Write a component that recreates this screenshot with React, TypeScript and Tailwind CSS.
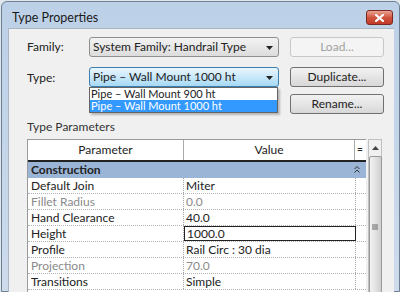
import React from 'react';

const font = { fontFamily: 'Lato, Roboto, sans-serif' };

const rows: { name: string; value: string; dim?: boolean; edit?: boolean }[] = [
  { name: 'Default Join', value: 'Miter' },
  { name: 'Fillet Radius', value: '0.0', dim: true },
  { name: 'Hand Clearance', value: '40.0' },
  { name: 'Height', value: '1000.0', edit: true },
  { name: 'Profile', value: 'Rail Circ : 30 dia' },
  { name: 'Projection', value: '70.0', dim: true },
  { name: 'Transitions', value: 'Simple' },
];

const Arrow = () => (
  <svg width="7" height="4" viewBox="0 0 7 4" className="absolute right-[5px] top-[8px]">
    <path d="M0 0h7L3.5 4z" fill="#222" />
  </svg>
);

const Button = ({ label, disabled }: { label: string; disabled?: boolean }) => (
  <div
    className={`h-[20px] w-[94px] rounded-[3px] border flex items-center justify-center text-[12px] ${
      disabled
        ? 'border-[#c8c8c8] bg-[#f4f4f4] text-[#a0a0a0]'
        : 'border-[#707070] bg-gradient-to-b from-[#f2f2f2] to-[#d8d8d8] text-[#222]'
    }`}
  >
    {label}
  </div>
);

export default function App() {
  return (
    <div className="w-[400px] h-[292px] bg-[#dfe6ee] overflow-hidden" style={font}>
      <div className="ml-[1px] mt-[1px] w-[399px] h-[291px] rounded-t-[6px] border border-[#6d7f93] bg-gradient-to-b from-[#bcd0e7] to-[#cddbeb] flex flex-col">
        <div className="h-[27px] flex items-start justify-between pl-[10px] pr-[6px]">
          <span className="text-[12.5px] text-[#1a1a1a] mt-[7px]">Type Properties</span>
          <div className="mt-[8px] w-[27px] h-[15px] rounded-[3px] border border-[#7a2a22] bg-gradient-to-b from-[#e8a393] via-[#d0543f] to-[#c13a26] flex items-center justify-center">
            <svg width="9" height="8" viewBox="0 0 9 8">
              <path d="M1 1l7 6M8 1L1 7" stroke="#fff" strokeWidth="2.2" strokeLinecap="square" />
            </svg>
          </div>
        </div>
        <div className="ml-[6px] w-[386px] flex-1 bg-[#f0f0f0] border-l border-t border-[#a9b6c4] flex flex-col pl-[18px] text-[12px] text-[#222]">
          <div className="flex items-center mt-[8px] h-[20px]">
            <span className="w-[62px]">Family:</span>
            <div className="relative w-[190px] h-[20px] rounded-[3px] border border-[#8e8f8f] bg-gradient-to-b from-[#f3f3f3] to-[#dcdcdc] pl-[3px] leading-[18px]">
              System Family: Handrail Type
              <Arrow />
            </div>
            <div className="ml-[11px]">
              <Button label="Load..." disabled />
            </div>
          </div>
          <div className="flex items-start mt-[10px]">
            <span className="w-[62px] mt-[2px]">Type:</span>
            <div className="flex flex-col">
              <div className="relative w-[190px] h-[20px] rounded-[3px] border border-[#3c7fb1] bg-gradient-to-b from-[#eaf6fd] to-[#a7d9f5] pl-[3px] leading-[18px]">
                Pipe – Wall Mount 1000 ht
                <Arrow />
              </div>
              <div className="relative z-10 w-[189px] border border-[#646464] bg-white shadow-[2px_2px_2px_rgba(0,0,0,0.25)] text-[11px] leading-[12px]">
                <div className="pl-[1px] h-[12px]">Pipe – Wall Mount 900 ht</div>
                <div className="pl-[1px] h-[12px] bg-[#3399ff] text-white">Pipe – Wall Mount 1000 ht</div>
              </div>
            </div>
            <div className="ml-[11px] flex flex-col gap-[7px]">
              <Button label="Duplicate..." />
              <Button label="Rename..." />
            </div>
          </div>
          <div className="mt-[4px] text-[#333]">Type Parameters</div>
          <div className="mt-[3px] flex">
            <div className="w-[339px] border-l border-t border-[#9a9a9a] bg-white">
              <div className="flex h-[22px] border-b-2 border-[#222] bg-white">
                <div className="w-[156px] border-r border-[#aaa] flex items-center justify-center">Parameter</div>
                <div className="w-[171px] border-r border-[#aaa] flex items-center justify-center">Value</div>
                <div className="w-[10px] flex items-center justify-center text-[10px] font-bold">=</div>
              </div>
              <div className="h-[16px] bg-[#9ab5d6] flex items-center justify-between pl-[3px] pr-[6px] font-bold">
                <span>Construction</span>
                <svg width="6" height="7" viewBox="0 0 6 7">
                  <path d="M0.5 3L3 0.5 5.5 3M0.5 6.5L3 4 5.5 6.5" stroke="#333" fill="none" />
                </svg>
              </div>
              {rows.map((r) => (
                <div key={r.name} className="flex h-[16px] border-b border-dotted border-[#b4b4b4]">
                  <div className={`w-[156px] pl-[3px] leading-[15px] border-r border-dotted border-[#a0a0a0] ${r.dim ? 'text-[#8a8a8a]' : ''}`}>
                    {r.name}
                  </div>
                  <div
                    className={`w-[172px] h-[15px] pl-[2px] leading-[13px] ${r.dim ? 'text-[#8a8a8a]' : ''} ${
                      r.edit ? 'border border-[#222]' : 'border-r border-dotted border-[#a0a0a0] leading-[15px]'
                    }`}
                  >
                    {r.value}
                  </div>
                </div>
              ))}
            </div>
            <div className="ml-[2px] w-[14px] h-[160px] border border-[#c0c0c0] bg-[#f0f0f0] flex flex-col items-center">
              <svg width="7" height="4" viewBox="0 0 7 4" className="mt-[6px]">
                <path d="M0 4h7L3.5 0z" fill="#444" />
              </svg>
              <div className="mt-[6px] w-[13px] flex-1 rounded-[2px] border border-[#9a9a9a] bg-gradient-to-r from-[#f2f2f2] via-[#e2e2e2] to-[#cfcfcf] flex items-center justify-center">
                <svg width="6" height="6" viewBox="0 0 6 6">
                  <path d="M0 1h6M0 3h6M0 5h6" stroke="#666" />
                </svg>
              </div>
            </div>
          </div>
        </div>
      </div>
    </div>
  );
}
